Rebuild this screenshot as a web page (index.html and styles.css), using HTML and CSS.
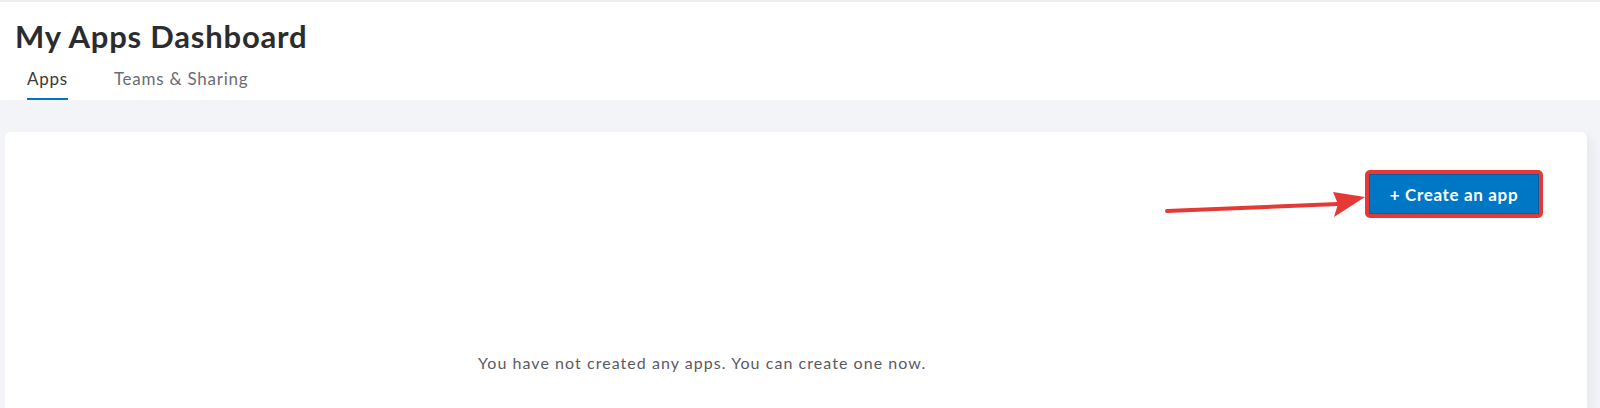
FILE: index.html
```html
<!DOCTYPE html>
<html>
<head>
<meta charset="utf-8">
<link rel="stylesheet" href="styles.css">
</head>
<body>
<div class="topline"></div>
<header class="header">
  <h1 class="title">My Apps Dashboard</h1>
  <nav class="tabs">
    <a class="tab active">Apps</a>
    <a class="tab">Teams &amp; Sharing</a>
  </nav>
</header>
<main class="main">
  <section class="card">
    <div class="actions">
      <svg class="arrow" width="202" height="30" viewBox="0 0 202 30">
        <line x1="3" y1="22" x2="174" y2="15" stroke="#e53935" stroke-width="4" stroke-linecap="round"/>
        <polygon points="201,8 169,3 174,15 170,28" fill="#e53935"/>
      </svg>
      <div class="btn-wrap"><button class="btn">+ Create an app</button></div>
    </div>
    <p class="empty">You have not created any apps. You can create one now.</p>
  </section>
</main>
</body>
</html>
```
FILE: styles.css
```css
html, body { margin: 0; padding: 0; }
body {
  width: 1600px;
  height: 408px;
  overflow: hidden;
  background: #f3f4f7;
  font-family: Lato, "Open Sans", sans-serif;
  color: #393a3d;
}
.topline { height: 2px; background: #eceef1; }
.header {
  background: #fff;
  padding: 15px 0 0 15px;
  box-sizing: border-box;
  height: 98px;
}
.title {
  margin: 0;
  font-size: 31px;
  font-weight: 700;
  line-height: 39px;
  color: #2b2c2f;
  letter-spacing: 0.8px;
}
.tabs { display: flex; gap: 46px; padding-left: 12px; margin-top: 8px; }
.tab {
  font-size: 17px;
  color: #6b6c72;
  height: 36px;
  line-height: 30px;
  box-sizing: border-box;
  letter-spacing: 0.75px;
}
.tab.active { color: #393a3d; border-bottom: 2px solid #0077c5; }
.main {
  display: flex;
  padding: 32px 13px 0 5px;
  height: 276px;
}
.card {
  flex: 1;
  background: #fff;
  border-radius: 6px 6px 0 0;
  box-shadow: 6px 4px 8px rgba(0,0,0,0.045);
  display: flex;
  flex-direction: column;
}
.actions {
  display: flex;
  justify-content: flex-end;
  align-items: flex-start;
  padding: 38px 44px 0 0;
}
.arrow { margin-top: 19px; margin-right: -1px; }
.btn-wrap {
  border: 4px solid #e5383b;
  border-radius: 5px;
  display: flex;
}
.btn {
  background: #0077c5;
  color: #fff;
  border: 1px solid #0a5fa0;
  font-family: Lato, "Open Sans", sans-serif;
  font-weight: 700;
  font-size: 17px;
  width: 170px;
  height: 40px;
  padding: 0;
  letter-spacing: 0.65px;
}
.empty {
  margin: 134px 0 0 473px;
  font-size: 16px;
  line-height: 20px;
  color: #5a5b60;
  letter-spacing: 1.05px;
}
```
